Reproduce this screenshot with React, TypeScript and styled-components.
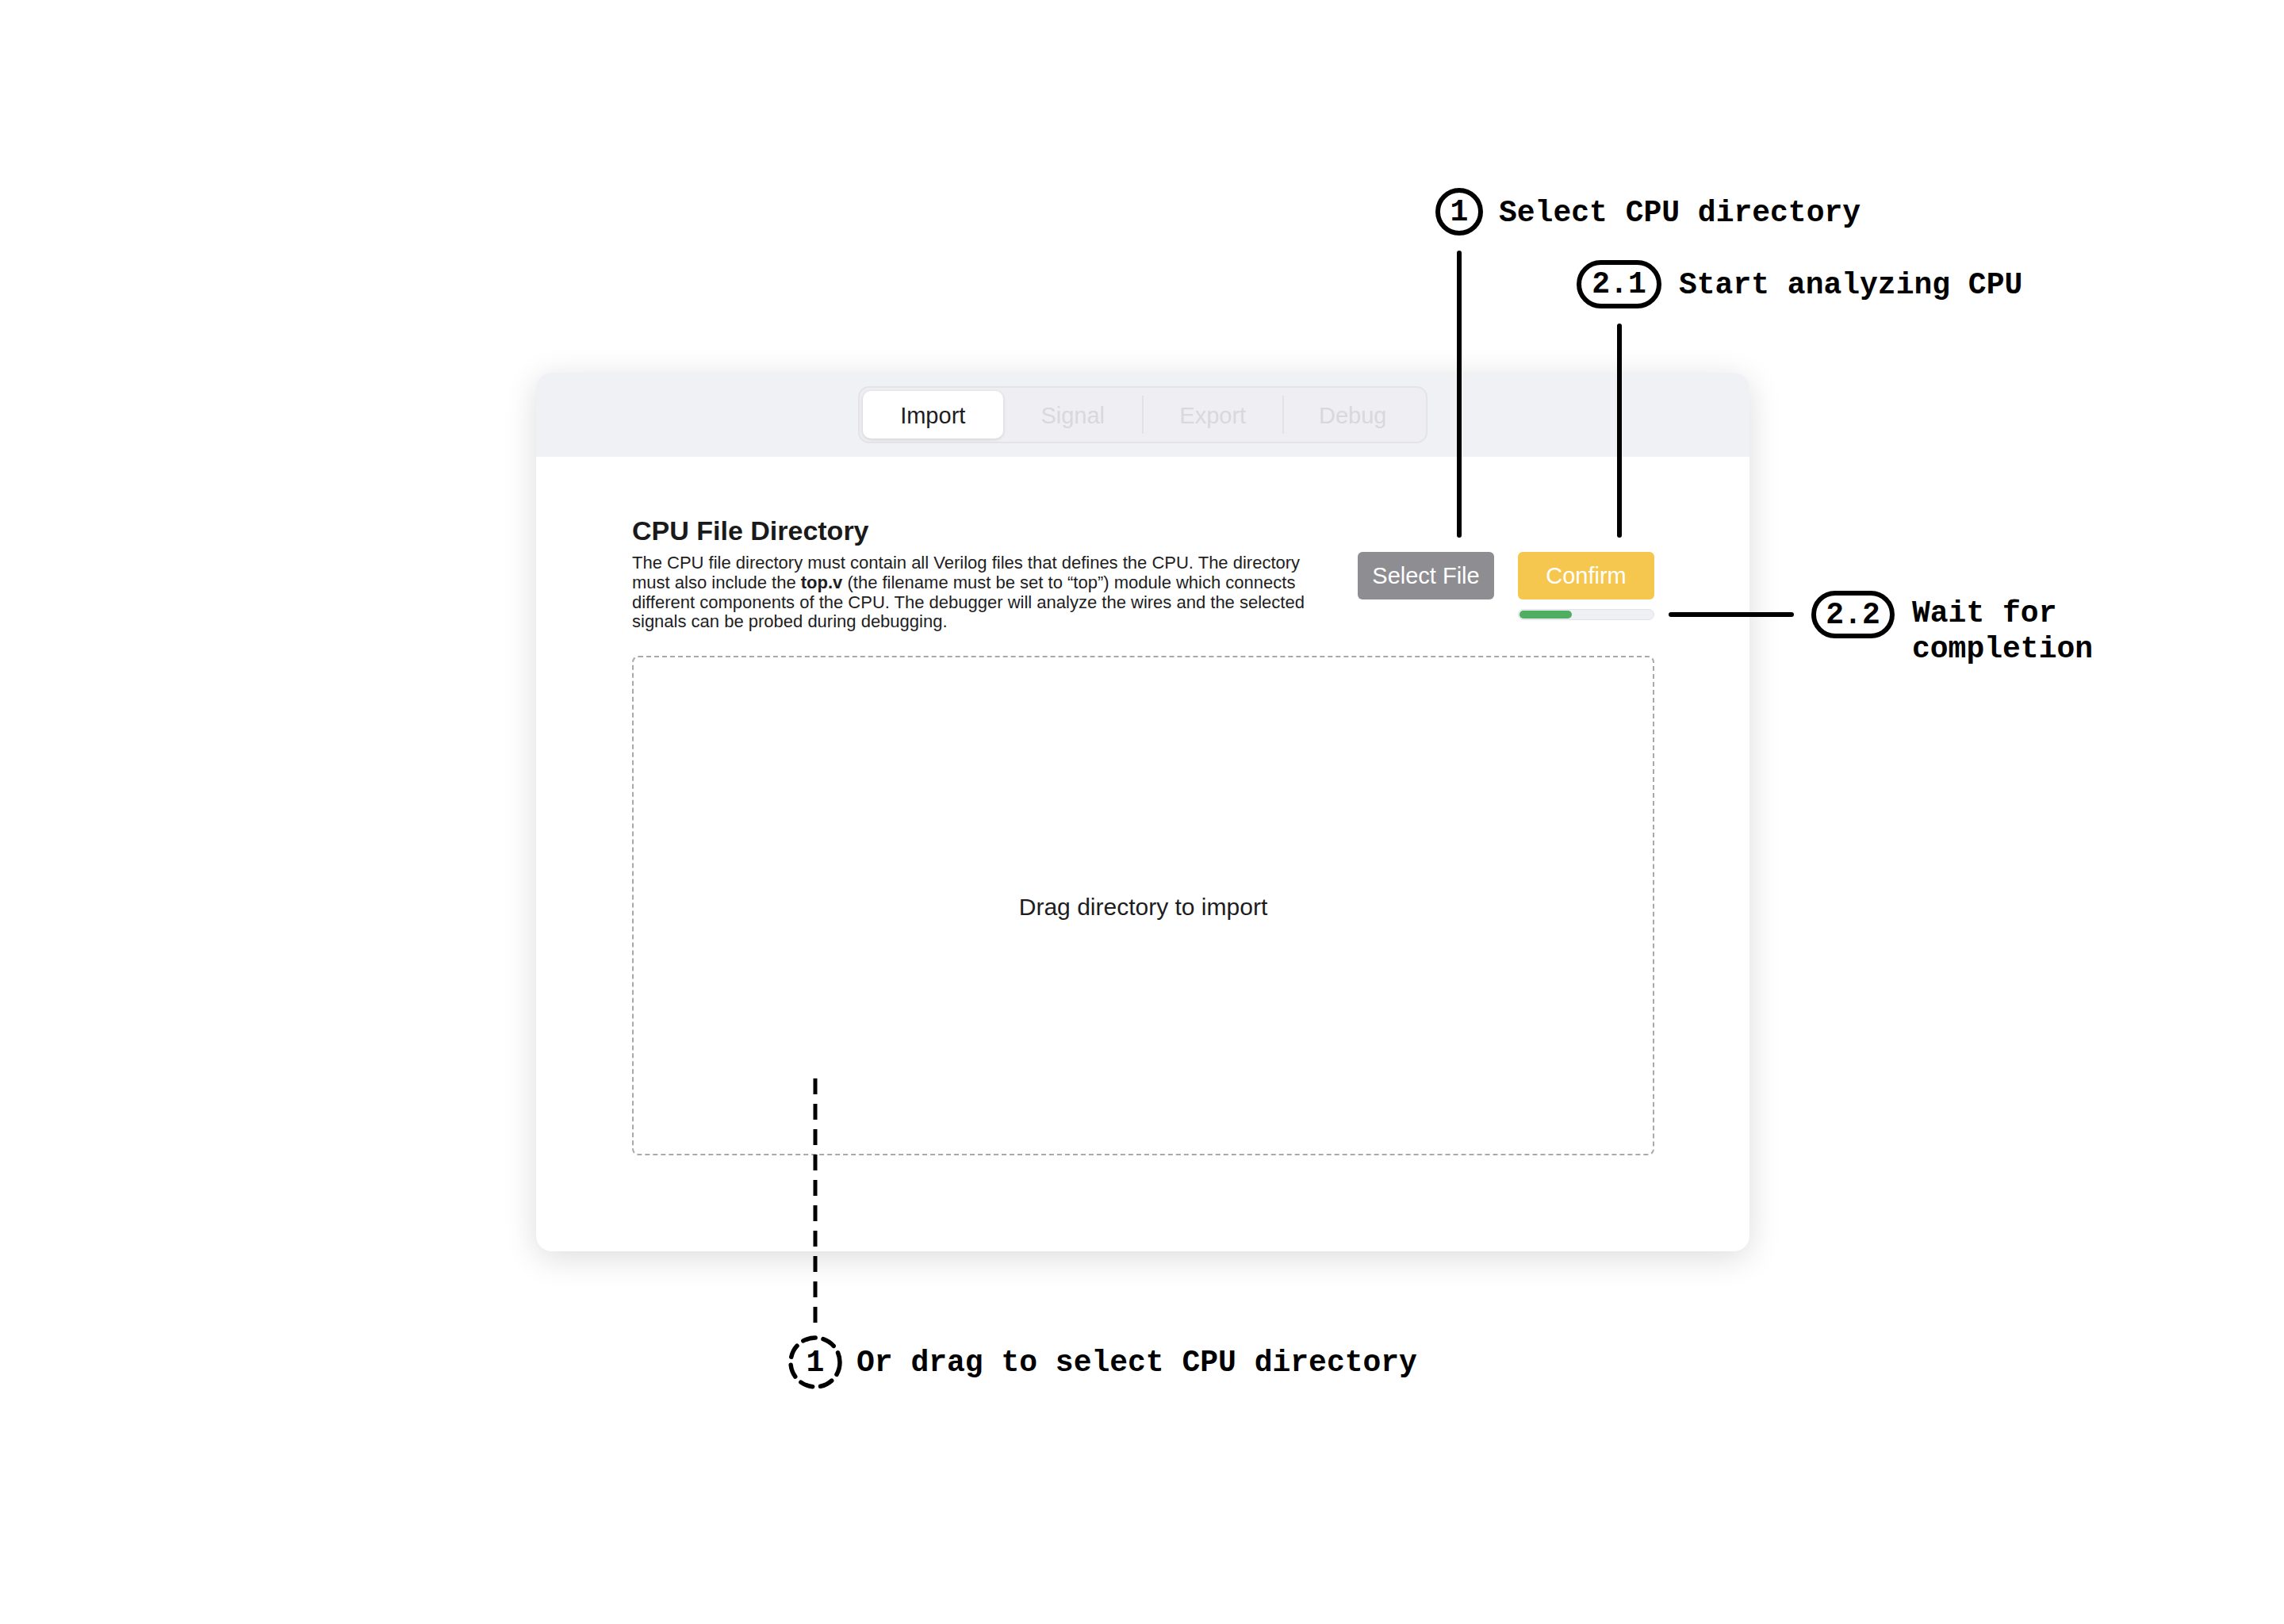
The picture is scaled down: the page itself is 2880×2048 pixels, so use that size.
import React from "react";
import styled, { createGlobalStyle } from "styled-components";

const GlobalStyle = createGlobalStyle`
  html, body { margin: 0; padding: 0; background: #ffffff; }
  body { font-family: "Liberation Sans", Arial, sans-serif; }
  * { box-sizing: border-box; }
`;

const Page = styled.div`
  position: relative;
  width: 2880px;
  height: 2048px;
  padding: 470px 0 0 676px;
  background: #ffffff;
  overflow: hidden;
`;

const Window = styled.div`
  width: 1530px;
  border-radius: 20px;
  background: #ffffff;
  box-shadow: 0 8px 42px rgba(0, 0, 0, 0.14);
  overflow: hidden;
`;

const TitleBar = styled.div`
  height: 106px;
  background: #f0f1f4;
  display: flex;
  align-items: center;
  justify-content: center;
`;

const Tabs = styled.div`
  width: 718px;
  height: 72px;
  border: 2px solid #e3e3e8;
  border-radius: 14px;
  background: #efeff3;
  padding: 4px;
  display: grid;
  grid-template-columns: repeat(4, 1fr);
`;

const Tab = styled.div<{ $active?: boolean; $divider?: boolean }>`
  position: relative;
  display: flex;
  align-items: center;
  justify-content: center;
  padding-top: 3px;
  font-size: 29px;
  color: ${(p) => (p.$active ? "#1d1d1f" : "#d8d8dd")};
  background: ${(p) => (p.$active ? "#ffffff" : "transparent")};
  border-radius: 10px;
  box-shadow: ${(p) => (p.$active ? "0 1px 4px rgba(0,0,0,0.14)" : "none")};

  &::before {
    content: "";
    display: ${(p) => (p.$divider ? "block" : "none")};
    position: absolute;
    left: -1px;
    top: 6px;
    bottom: 6px;
    width: 2px;
    background: #e2e2e6;
  }
`;

const Body = styled.div`
  padding: 74px 120px 121px 121px;
`;

const IntroRow = styled.div`
  display: flex;
  justify-content: space-between;
  align-items: flex-start;
`;

const Intro = styled.div`
  width: 880px;
`;

const Heading = styled.h2`
  margin: 0;
  font-size: 34px;
  line-height: 38px;
  font-weight: 700;
  color: #1a1a1a;
`;

const Description = styled.p`
  margin: 10px 0 0;
  font-size: 22px;
  line-height: 24.75px;
  color: #1e1e1e;

  strong {
    font-weight: 700;
  }
`;

const Actions = styled.div`
  margin-top: 46px;
  display: grid;
  grid-template-columns: 172px 172px;
  column-gap: 30px;
  row-gap: 12px;
`;

const ActionButton = styled.button<{ $tone: "gray" | "yellow" }>`
  height: 60px;
  border: none;
  border-radius: 6px;
  padding: 0;
  font-family: "Liberation Sans", Arial, sans-serif;
  font-size: 29px;
  color: #ffffff;
  background: ${(p) => (p.$tone === "gray" ? "#8e8d92" : "#f6c74f")};
`;

const Progress = styled.div`
  grid-column: 2;
  height: 14px;
  border-radius: 7px;
  background: #eff0f3;
  border: 1.5px solid #e1e2e6;
  padding: 1px;
`;

const ProgressFill = styled.div<{ $pct: number }>`
  width: ${(p) => p.$pct}%;
  height: 100%;
  border-radius: 6px;
  background: #4fae62;
`;

const DropZone = styled.div`
  margin-top: 30px;
  height: 630px;
  border: 2px dashed #a9a9a9;
  border-radius: 8px;
  display: flex;
  align-items: center;
  justify-content: center;
  padding-top: 4px;
  font-size: 30px;
  color: #1d1d1f;
`;

/* ---------- annotation overlay (free canvas) ---------- */

const mono = `"Liberation Mono", "Courier New", monospace`;

const Callout = styled.div<{ $x: number; $y: number; $cols: number; $colGap: number; $rowGap: number }>`
  position: absolute;
  left: ${(p) => p.$x}px;
  top: ${(p) => p.$y}px;
  display: grid;
  grid-template-columns: repeat(${(p) => p.$cols}, auto);
  align-items: start;
  column-gap: ${(p) => p.$colGap}px;
  row-gap: ${(p) => p.$rowGap}px;
`;

const Badge = styled.div<{ $w: number; $h: number }>`
  width: ${(p) => p.$w}px;
  height: ${(p) => p.$h}px;
  border: 6px solid #000;
  border-radius: 999px;
  display: flex;
  align-items: center;
  justify-content: center;
  font-family: ${mono};
  font-weight: 700;
  font-size: 38px;
  color: #000;
`;

const DashedBadge = styled.div<{ $size: number }>`
  position: relative;
  width: ${(p) => p.$size}px;
  height: ${(p) => p.$size}px;
  display: flex;
  align-items: center;
  justify-content: center;
  font-family: ${mono};
  font-weight: 700;
  font-size: 38px;
  color: #000;

  svg {
    position: absolute;
    inset: 0;
  }
`;

const Label = styled.div<{ $drop: number }>`
  padding-top: ${(p) => p.$drop}px;
  font-family: ${mono};
  font-weight: 700;
  font-size: 38px;
  line-height: 45px;
  color: #000;
  white-space: pre;
`;

const VLine = styled.div<{ $len: number }>`
  grid-column: 1;
  justify-self: center;
  width: 6px;
  height: ${(p) => p.$len}px;
  background: #000;
  border-radius: 3px;
`;

const HLine = styled.div<{ $len: number; $drop: number }>`
  margin-top: ${(p) => p.$drop}px;
  width: ${(p) => p.$len}px;
  height: 6px;
  background: #000;
  border-radius: 3px;
`;

const DashedVLine = styled.svg`
  grid-column: 1;
  justify-self: center;
  display: block;
`;

const Spacer = styled.span``;

const tabs = ["Import", "Signal", "Export", "Debug"];

export default function App() {
  return (
    <>
      <GlobalStyle />
      <Page>
        <Window>
          <TitleBar>
            <Tabs>
              {tabs.map((t, i) => (
                <Tab key={t} $active={i === 0} $divider={i >= 2}>
                  {t}
                </Tab>
              ))}
            </Tabs>
          </TitleBar>
          <Body>
            <IntroRow>
              <Intro>
                <Heading>CPU File Directory</Heading>
                <Description>
                  The CPU file directory must contain all Verilog files that defines the CPU. The
                  directory must also include the <strong>top.v</strong> (the filename must be set to
                  “top”) module which connects different components of the CPU. The debugger will
                  analyze the wires and the selected signals can be probed during debugging.
                </Description>
              </Intro>
              <Actions>
                <ActionButton $tone="gray">Select File</ActionButton>
                <ActionButton $tone="yellow">Confirm</ActionButton>
                <Progress>
                  <ProgressFill $pct={39} />
                </Progress>
              </Actions>
            </IntroRow>
            <DropZone>Drag directory to import</DropZone>
          </Body>
        </Window>

        {/* step 1: select CPU directory */}
        <Callout $x={1810} $y={237} $cols={2} $colGap={20} $rowGap={19}>
          <Badge $w={60} $h={60}>1</Badge>
          <Label $drop={9}>Select CPU directory</Label>
          <VLine $len={362} />
        </Callout>

        {/* step 2.1: start analyzing */}
        <Callout $x={1988} $y={328} $cols={2} $colGap={22} $rowGap={19}>
          <Badge $w={107} $h={61}>2.1</Badge>
          <Label $drop={9}>Start analyzing CPU</Label>
          <VLine $len={270} />
        </Callout>

        {/* step 2.2: wait for completion */}
        <Callout $x={2104} $y={745} $cols={3} $colGap={22} $rowGap={0}>
          <HLine $len={158} $drop={27} />
          <Badge $w={105} $h={60}>2.2</Badge>
          <Label $drop={6}>{"Wait for\ncompletion"}</Label>
        </Callout>

        {/* alternative step 1: drag */}
        <Callout $x={994} $y={1360} $cols={2} $colGap={18} $rowGap={14}>
          <DashedVLine width={6} height={310}>
            <line x1={3} y1={0} x2={3} y2={310} stroke="#000" strokeWidth={5} strokeDasharray="20 12" />
          </DashedVLine>
          <Spacer />
          <DashedBadge $size={68}>
            <svg width={68} height={68} viewBox="0 0 68 68">
              <circle
                cx={34}
                cy={34}
                r={31}
                fill="none"
                stroke="#000"
                strokeWidth={5.5}
                strokeDasharray="16 10"
                strokeLinecap="round"
              />
            </svg>
            1
          </DashedBadge>
          <Label $drop={12}>Or drag to select CPU directory</Label>
        </Callout>
      </Page>
    </>
  );
}
